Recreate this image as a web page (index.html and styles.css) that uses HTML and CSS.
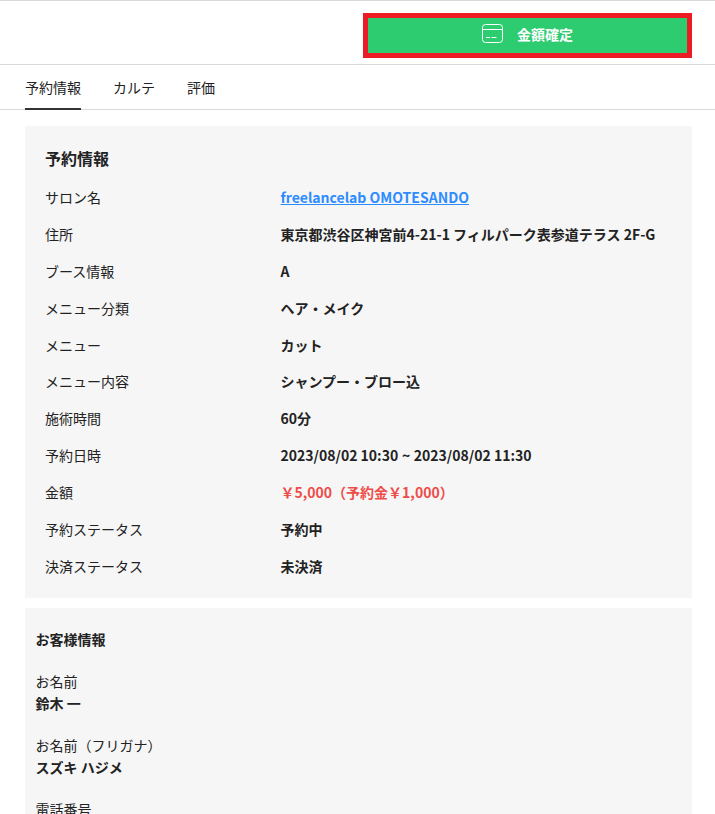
FILE: index.html
```html
<!DOCTYPE html>
<html lang="ja">
<head>
    <meta charset="UTF-8">
    <meta name="viewport" content="width=device-width, initial-scale=1.0">
    <title>予約情報</title>
    <link rel="stylesheet" href="styles.css">
</head>
<body>

<div class="action-bar">
    <button class="confirm-btn" type="button">
        <svg class="confirm-icon" width="21" height="19" viewBox="0 0 21 19" fill="none" stroke="#fff" stroke-width="1">
            <rect x="0.5" y="0.5" width="20" height="18" rx="3"></rect>
            <path d="M0.5 5.5H20.5"></path>
            <path d="M4 13.5H8M9.5 13.5H14.5"></path>
        </svg>
        <span>金額確定</span>
    </button>
</div>

<div class="tabs">
    <a class="tab active">予約情報</a>
    <a class="tab">カルテ</a>
    <a class="tab">評価</a>
</div>

<div class="content">
    <div class="card reserve">
        <h3>予約情報</h3>
        <div class="row"><div class="label">サロン名</div><div class="value"><a class="link">freelancelab OMOTESANDO</a></div></div>
        <div class="row"><div class="label">住所</div><div class="value">東京都渋谷区神宮前4-21-1 フィルパーク表参道テラス 2F-G</div></div>
        <div class="row"><div class="label">ブース情報</div><div class="value">A</div></div>
        <div class="row"><div class="label">メニュー分類</div><div class="value">ヘア・メイク</div></div>
        <div class="row"><div class="label">メニュー</div><div class="value">カット</div></div>
        <div class="row"><div class="label">メニュー内容</div><div class="value">シャンプー・ブロー込</div></div>
        <div class="row"><div class="label">施術時間</div><div class="value">60分</div></div>
        <div class="row"><div class="label">予約日時</div><div class="value">2023/08/02 10:30 <span class="range-sep">~</span> 2023/08/02 11:30</div></div>
        <div class="row"><div class="label">金額</div><div class="value price">￥5,000（予約金￥1,000）</div></div>
        <div class="row"><div class="label">予約ステータス</div><div class="value">予約中</div></div>
        <div class="row"><div class="label">決済ステータス</div><div class="value">未決済</div></div>
    </div>

    <div class="card customer">
        <h4>お客様情報</h4>
        <div class="field"><div class="label">お名前</div><div class="value">鈴木 一</div></div>
        <div class="field"><div class="label">お名前（フリガナ）</div><div class="value">スズキ ハジメ</div></div>
        <div class="field"><div class="label">電話番号</div></div>
    </div>
</div>

</body>
</html>
```

FILE: styles.css
```css
html, body { height: 814px; overflow: hidden; }
body { margin: 0; font-family: "Noto Sans CJK JP", "Noto Sans", sans-serif; font-size: 14px; color: #222; background-color: #fff; }

.action-bar { display: flex; justify-content: flex-end; height: 65px; padding: 13px 23px 0 0; box-sizing: border-box; border-top: 1px solid #d9d9d9; border-bottom: 1px solid #d9d9d9; }
.confirm-btn { display: flex; align-items: center; justify-content: center; gap: 14px; width: 329px; height: 45px; margin-top: -1px; padding: 0 0 4px; border: 5px solid #ed1c24; background-color: #2ecc71; color: #fff; font-family: inherit; font-size: 14px; font-weight: 700; box-sizing: border-box; }
.confirm-icon { display: block; }

.tabs { display: flex; gap: 32px; height: 45px; padding-left: 25px; box-sizing: border-box; border-bottom: 1px solid #d9d9d9; }
.tab { height: 45px; line-height: 44px; box-sizing: border-box; color: #222; }
.tab.active { border-bottom: 2px solid #333; }

.content { padding: 16px 23px 0 25px; }
.card { background-color: #f6f6f6; }
.reserve { height: 472px; padding: 20px 20px 0; box-sizing: border-box; }
.reserve h3 { margin: 0 0 9px; font-size: 16px; line-height: 24px; font-weight: 700; color: #222; }
.row { display: flex; height: 36.9px; line-height: 36.9px; }
.row .label { width: 235.5px; flex-shrink: 0; }
.value { font-weight: 700; color: #222; }
.link { color: #2d8cff; text-decoration: underline; }
.price { color: #ee4c48; }
.range-sep { margin: 0 0.5px; }

.customer { margin-top: 10px; padding: 20px 10.5px 0; height: 300px; box-sizing: border-box; }
.customer h4 { margin: 0 0 20px; font-size: 14px; line-height: 22px; font-weight: 700; color: #222; }
.field { margin-bottom: 20px; line-height: 22px; }
```
